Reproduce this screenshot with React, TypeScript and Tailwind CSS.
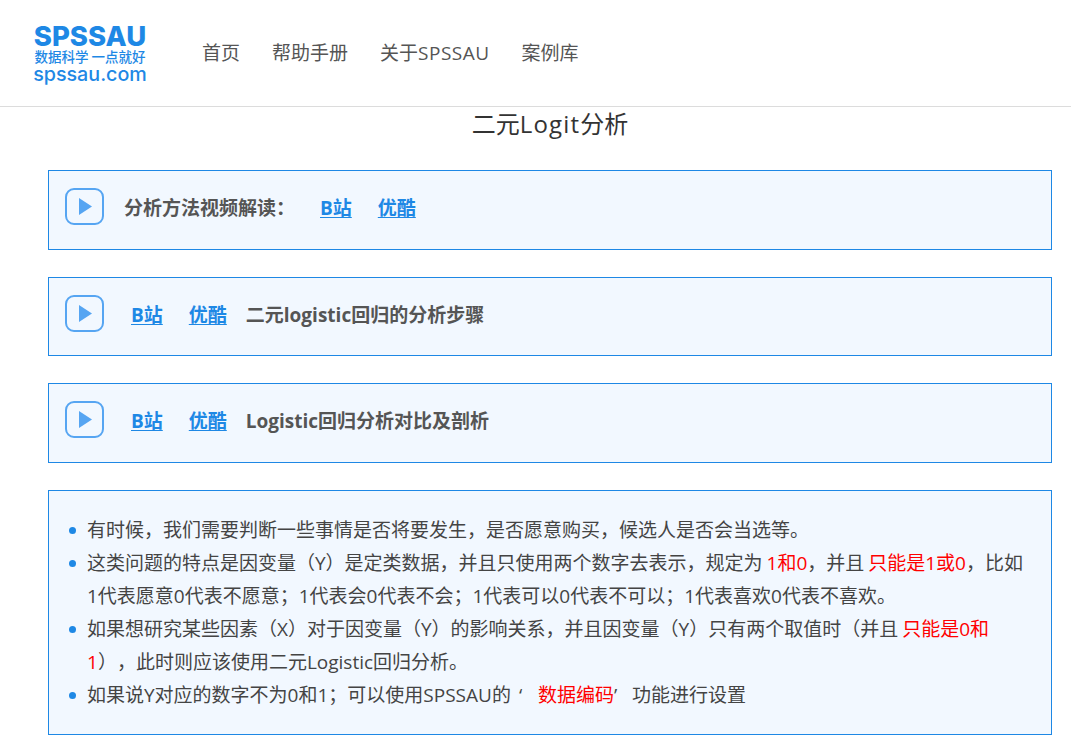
import React from 'react';

const PlayIcon = () => (
  <svg width="39" height="37" viewBox="0 0 39 37" className="mb-[3px] shrink-0">
    <rect x="1" y="1" width="37" height="35" rx="8" fill="none" stroke="#56a5f2" strokeWidth="2" />
    <path d="M14 10 L27 18.5 L14 27 Z" fill="#56a5f2" />
  </svg>
);

const VideoLink = ({ children }: { children: React.ReactNode }) => (
  <a href="#" className="font-bold text-[#1e88e5] underline underline-offset-2">
    {children}
  </a>
);

const VideoPanel = ({ height, children }: { height: string; children: React.ReactNode }) => (
  <div className={`flex items-center border border-[#1e88e5] bg-[#f2f8ff] pb-[4px] pl-[16px] ${height}`}>
    <PlayIcon />
    {children}
  </div>
);

const Red = ({ children }: { children: React.ReactNode }) => <span className="text-[#ff0000]">{children}</span>;

const Bullet = ({ children }: { children: React.ReactNode }) => (
  <li className="flex">
    <span className="mt-[13px] mr-[11px] h-[7px] w-[7px] shrink-0 rounded-full bg-[#1e88e5]" />
    <span className="min-w-0 flex-1">{children}</span>
  </li>
);

export default function App() {
  return (
    <div className="min-h-[738px] overflow-hidden bg-white font-['Open_Sans','Noto_Sans_CJK_SC',sans-serif] [text-spacing-trim:space-all]">
      <header className="flex h-[107px] items-center border-b border-[#dcdcdc] pl-[33px]">
        <div className="flex w-[114px] flex-col items-center pt-[1px] text-[#1e88e5]">
          <span className="font-['Inter',sans-serif] text-[27.5px] leading-[24px] font-extrabold">SPSSAU</span>
          <span className="mt-[1px] font-['Noto_Sans_CJK_SC',sans-serif] text-[13.5px] leading-[15px] font-medium whitespace-nowrap">数据科学 一点就好</span>
          <span className="font-['Inter',sans-serif] text-[19.7px] leading-[20px] font-medium">spssau.com</span>
        </div>
        <nav className="ml-[55px] flex gap-[32px] text-[19px] leading-[28px] text-[#555555]">
          <a href="#">首页</a>
          <a href="#">帮助手册</a>
          <a href="#">关于<span className="tracking-[0.5px]">SPSSAU</span></a>
          <a href="#">案例库</a>
        </nav>
      </header>

      <h1 className="h-[34px] pl-[29px] text-center text-[24px] leading-[34px] text-[#333333]">
        二元<span className="tracking-[1.2px]">Logit</span>分析
      </h1>

      <main className="mt-[29px] flex flex-col pr-[19px] pl-[48px] text-[19px]">
        <div className="flex flex-col gap-[27px]">
          <VideoPanel height="h-[80px]">
            <span className="ml-[20px] font-bold text-[#555555]">分析方法视频解读：</span>
            <span className="ml-[25px] flex gap-[26px]">
              <VideoLink>B站</VideoLink>
              <VideoLink>优酷</VideoLink>
            </span>
          </VideoPanel>
          <VideoPanel height="h-[79px]">
            <span className="ml-[27px] flex gap-[26px] pt-[1px]">
              <VideoLink>B站</VideoLink>
              <VideoLink>优酷</VideoLink>
            </span>
            <span className="ml-[19px] pt-[1px] font-bold text-[#555555]">二元logistic回归的分析步骤</span>
          </VideoPanel>
          <VideoPanel height="h-[80px]">
            <span className="ml-[27px] flex gap-[26px]">
              <VideoLink>B站</VideoLink>
              <VideoLink>优酷</VideoLink>
            </span>
            <span className="ml-[19px] font-bold text-[#555555]">Logistic回归分析对比及剖析</span>
          </VideoPanel>
        </div>

        <div className="mt-[27px] h-[245px] border border-[#1e88e5] bg-[#f2f8ff] pt-[23px] pr-[21px] pl-[20px] text-[19px] leading-[33px] text-[#444444] [word-spacing:-1px]">
          <ul>
            <Bullet>有时候，我们需要判断一些事情是否将要发生，是否愿意购买，候选人是否会当选等。</Bullet>
            <Bullet>
              这类问题的特点是因变量（Y）是定类数据，并且只使用两个数字去表示，规定为 <Red>1和0</Red>，并且 <Red>只能是1或0</Red>，比如1代表愿意0代表不愿意；1代表会0代表不会；1代表可以0代表不可以；1代表喜欢0代表不喜欢。
            </Bullet>
            <Bullet>
              如果想研究某些因素（X）对于因变量（Y）的影响关系，并且因变量（Y）只有两个取值时（并且 <Red>只能是0和1</Red>），此时则应该使用二元Logistic回归分析。
            </Bullet>
            <Bullet>
              如果说Y对应的数字不为0和1；可以使用SPSSAU的<span className="inline-block w-[27px] pl-[8px]">‘</span><Red>数据编码</Red><span className="inline-block w-[18px]">’</span>功能进行设置
            </Bullet>
          </ul>
        </div>
      </main>
    </div>
  );
}
